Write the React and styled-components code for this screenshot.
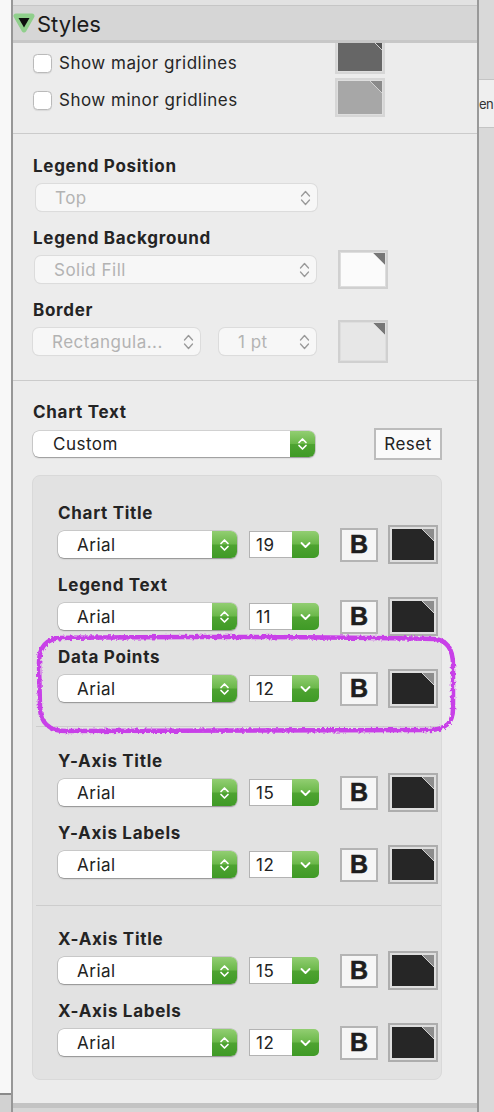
import React from 'react';
import styled, { createGlobalStyle } from 'styled-components';

const GlobalStyle = createGlobalStyle`
  html, body { margin: 0; padding: 0; }
  body {
    width: 494px;
    height: 1112px;
    overflow: hidden;
    background: #ececec;
    font-family: Inter, "Noto Sans", sans-serif;
    color: #242424;
  }
`;

const green = 'linear-gradient(180deg, #92ce72 0%, #6bb84a 48%, #4ea331 52%, #3f9a26 100%)';

const sections = [
  { top: 27, bottom: 17, rows: [
    { label: 'Chart Title', size: 19 },
    { label: 'Legend Text', size: 11 },
    { label: 'Data Points', size: 12 },
  ] },
  { top: 24, bottom: 20, rows: [
    { label: 'Y-Axis Title', size: 15 },
    { label: 'Y-Axis Labels', size: 12 },
  ] },
  { top: 23, bottom: 16, rows: [
    { label: 'X-Axis Title', size: 15 },
    { label: 'X-Axis Labels', size: 12 },
  ] },
];

function UpDown({ color = '#fff', weight = 1.7, big }) {
  const h = big ? 18 : 16;
  return (
    <svg width="11" height={h} viewBox={`0 0 11 ${h}`} fill="none" stroke={color}
      strokeWidth={weight} strokeLinecap="round" strokeLinejoin="round">
      {big ? (
        <>
          <path d="M1.5 7 L5.5 2.5 L9.5 7" />
          <path d="M1.5 11 L5.5 15.5 L9.5 11" />
        </>
      ) : (
        <>
          <path d="M2 6.5 L5.5 3 L9 6.5" />
          <path d="M2 9.5 L5.5 13 L9 9.5" />
        </>
      )}
    </svg>
  );
}

function Down() {
  return (
    <svg width="11" height="8" viewBox="0 0 11 8" fill="none" stroke="#fff"
      strokeWidth="1.8" strokeLinecap="round" strokeLinejoin="round">
      <path d="M1.5 2 L5.5 6 L9.5 2" />
    </svg>
  );
}

function Disclosure() {
  return (
    <svg width="22" height="22" viewBox="0 0 22 22">
      <path d="M3 4 L19 4 L11 18 Z" fill="#90cf8c" stroke="#90cf8c" strokeWidth="5" strokeLinejoin="round" />
      <path d="M5.5 6 L16.5 6 L11 15.5 Z" fill="#0e0e0e" />
    </svg>
  );
}

function Highlight() {
  return (
    <Overlay width="424" height="104" viewBox="0 0 424 104">
      <defs>
        <filter id="crayon" x="-5%" y="-10%" width="110%" height="120%">
          <feTurbulence type="fractalNoise" baseFrequency="0.35" numOctaves="2" seed="4" result="n" />
          <feDisplacementMap in="SourceGraphic" in2="n" scale="4" />
        </filter>
      </defs>
      <path
        d="M24 5 C120 3 300 4 398 6 C412 7 417 18 417 32 L417 76 C417 90 410 97 392 97 L30 98 C14 98 4 90 4 74 L3 30 C3 14 10 6 24 5 Z"
        fill="none" stroke="#c83fe8" strokeWidth="4.5" filter="url(#crayon)" />
    </Overlay>
  );
}

export default function App() {
  return (
    <Screen>
      <GlobalStyle />
      <LeftStrip>
        <StripFill />
        <StripFoot />
      </LeftStrip>

      <Panel>
        <TopEdge />
        <Header>
          <Disclosure />
          <HeaderTitle>Styles</HeaderTitle>
        </Header>

        <Body>
          <GridSection>
            <CheckColumn>
              <CheckRow><Checkbox />Show major gridlines</CheckRow>
              <CheckRow><Checkbox />Show minor gridlines</CheckRow>
            </CheckColumn>
            <SwatchColumn>
              <Swatch $frame="#d6d6d6"><Fill $color="#666666" $corner="#555" /></Swatch>
              <Swatch $frame="#d6d6d6"><Fill $color="#a7a7a7" $corner="#8a8a8a" /></Swatch>
            </SwatchColumn>
          </GridSection>

          <Section $top={22} $bottom={18}>
            <Block>
              <Label>Legend Position</Label>
              <Row>
                <DisabledSelect $w={281} $inset={3}>Top<UpDown big color="#999" weight={1.3} /></DisabledSelect>
              </Row>
            </Block>
            <Block>
              <Label>Legend Background</Label>
              <Row $gap={22}>
                <DisabledSelect $w={281} $inset={2}>Solid Fill<UpDown big color="#999" weight={1.3} /></DisabledSelect>
                <Swatch $frame="#d0d0d0" $h={39}><Fill $color="#fbfbfb" $corner="#777" /></Swatch>
              </Row>
            </Block>
            <Block>
              <Label>Border</Label>
              <Row>
                <DisabledSelect $w={167}>Rectangula...<UpDown big color="#999" weight={1.3} /></DisabledSelect>
                <DisabledSelect $w={97} $inset={19}>1 pt<UpDown big color="#999" weight={1.3} /></DisabledSelect>
                <Swatch $frame="#d0d0d0" $h={43} $inset={22}><Fill $color="#e7e7e7" $corner="#777" /></Swatch>
              </Row>
            </Block>
          </Section>

          <TextSection>
            <Block>
              <Label>Chart Text</Label>
              <Row $spread>
                <Select $w={282} $h={26}>
                  <SelectText $pad={20}>Custom</SelectText>
                  <Stepper><UpDown /></Stepper>
                </Select>
                <ResetButton>Reset</ResetButton>
              </Row>
            </Block>

            <Group>
              {sections.map((section, i) => (
                <React.Fragment key={i}>
                  {i > 0 && <Divider />}
                  <GroupSection $top={section.top} $bottom={section.bottom}>
                    {section.rows.map(row => (
                      <Block key={row.label}>
                        <Label>{row.label}</Label>
                        <Row>
                          <Select $w={179} $h={27}>
                            <SelectText $pad={19}>Arial</SelectText>
                            <Stepper><UpDown /></Stepper>
                          </Select>
                          <Combo>
                            <ComboInput>{row.size}</ComboInput>
                            <ComboButton><Down /></ComboButton>
                          </Combo>
                          <BoldButton>B</BoldButton>
                          <Swatch $frame="#adadad" $inset={10} $pad>
                            <Fill $color="#262626" $corner="#8d8d8d" />
                          </Swatch>
                        </Row>
                      </Block>
                    ))}
                  </GroupSection>
                </React.Fragment>
              ))}
            </Group>
          </TextSection>
        </Body>

        <Footer />
      </Panel>

      <RightStrip>
        <TabBox><TabText>en</TabText></TabBox>
      </RightStrip>

      <Highlight />
    </Screen>
  );
}

const Screen = styled.div`
  position: relative;
  display: flex;
  width: 494px;
  height: 1112px;
  overflow: hidden;
`;

const LeftStrip = styled.div`
  display: flex;
  flex-direction: column;
  width: 11px;
  border-right: 2px solid #979797;
`;

const StripFill = styled.div`
  flex: 1;
  background: #f8f8f8;
`;

const StripFoot = styled.div`
  height: 17px;
  border-top: 2px solid #8a8a8a;
  background: #d2d2d2;
`;

const Panel = styled.div`
  display: flex;
  flex-direction: column;
  width: 464px;
  background: #ececec;
`;

const TopEdge = styled.div`
  height: 5px;
  background: #e2e2e2;
  border-bottom: 1px solid #c6c6c6;
`;

const Header = styled.div`
  display: flex;
  align-items: center;
  gap: 2px;
  height: 34px;
  background: #d6d6d6;
  border-bottom: 3px solid #c7c7c7;
  position: relative;
  z-index: 1;
`;

const HeaderTitle = styled.span`
  font-size: 22px;
  color: #1b1b1b;
  margin-top: 1px;
`;

const Body = styled.div`
  flex: 1;
  overflow: hidden;
`;

const GridSection = styled.div`
  display: flex;
  justify-content: space-between;
  margin-top: -8px;
  padding: 0 92px 14px 20px;
  border-bottom: 1px solid #cbcbcb;
`;

const CheckColumn = styled.div`
  display: flex;
  flex-direction: column;
  padding-top: 9.5px;
`;

const CheckRow = styled.label`
  display: flex;
  align-items: center;
  gap: 7px;
  height: 37px;
  font-size: 17px;
  letter-spacing: 0.5px;
  color: #262626;
`;

const Checkbox = styled.span`
  width: 19px;
  height: 19px;
  box-sizing: border-box;
  background: #fff;
  border: 1px solid #bababa;
  border-radius: 4.5px;
  box-shadow: 0 0.5px 1px rgba(0, 0, 0, 0.08);
`;

const SwatchColumn = styled.div`
  display: flex;
  flex-direction: column;
  gap: 4px;
`;

const Swatch = styled.div`
  flex: none;
  display: flex;
  width: ${p => p.$w || 50}px;
  height: ${p => p.$h || 39}px;
  box-sizing: border-box;
  margin-left: ${p => p.$inset || 0}px;
  border: 2px solid ${p => p.$frame};
  padding: ${p => (p.$pad ? '2px' : '1px')};
  background: #dedede;
`;

const Fill = styled.div`
  flex: 1;
  background: linear-gradient(225deg,
    ${p => p.$corner} 0, ${p => p.$corner} 8px,
    #d2d2d2 8px, #d2d2d2 9px,
    ${p => p.$color} 9px);
`;

const Section = styled.div`
  display: flex;
  flex-direction: column;
  gap: 10px;
  padding: ${p => p.$top}px 35px ${p => p.$bottom}px 20px;
  border-bottom: 1px solid #cbcbcb;
`;

const TextSection = styled.div`
  display: flex;
  flex-direction: column;
  gap: 11px;
  padding: 21px 35px 0 20px;
`;

const Block = styled.div`
  display: flex;
  flex-direction: column;
  gap: 2px;
`;

const Label = styled.div`
  font-size: 17px;
  font-weight: 700;
  letter-spacing: 0.7px;
  line-height: 20px;
  color: #242424;
`;

const Row = styled.div`
  display: flex;
  align-items: center;
  justify-content: ${p => (p.$spread ? 'space-between' : 'flex-start')};
  gap: ${p => p.$gap || 0}px;
  height: 40px;
`;

const DisabledSelect = styled.div`
  flex: none;
  display: flex;
  align-items: center;
  justify-content: space-between;
  width: ${p => p.$w}px;
  height: 27px;
  box-sizing: border-box;
  margin-left: ${p => p.$inset || 0}px;
  padding: 0 6px 0 19px;
  background: #f7f7f7;
  border-radius: 6px;
  box-shadow: 0 0 0 1px #dcdcdc, 0 1px 1px rgba(0, 0, 0, 0.06);
  font-size: 17px;
  letter-spacing: 0.5px;
  color: #b3b3b3;
`;

const Select = styled.div`
  flex: none;
  display: flex;
  width: ${p => p.$w}px;
  height: ${p => p.$h}px;
  background: #fff;
  border-radius: 6px;
  box-shadow: 0 0 0 0.5px rgba(0, 0, 0, 0.22), 0 1px 1.5px rgba(0, 0, 0, 0.28);
  overflow: hidden;
`;

const SelectText = styled.span`
  flex: 1;
  display: flex;
  align-items: center;
  padding-left: ${p => p.$pad}px;
  font-size: 17px;
  letter-spacing: 0.5px;
  color: #222;
`;

const Stepper = styled.span`
  display: flex;
  align-items: center;
  justify-content: center;
  width: 25px;
  background: ${green};
`;

const ResetButton = styled.div`
  display: flex;
  align-items: center;
  justify-content: center;
  width: 68px;
  height: 32px;
  box-sizing: border-box;
  background: #fafafa;
  border: 2px solid #bcbcbc;
  font-size: 17px;
  letter-spacing: 0.5px;
  color: #222;
`;

const Group = styled.div`
  margin-left: -1px;
  background: #e2e2e2;
  border: 1px solid #d9d9d9;
  border-radius: 8px;
`;

const GroupSection = styled.div`
  display: flex;
  flex-direction: column;
  gap: 10px;
  padding: ${p => p.$top}px 3px ${p => p.$bottom}px 25px;
`;

const Divider = styled.div`
  height: 1px;
  margin-left: 3px;
  background: #cdcdcd;
`;

const Combo = styled.div`
  flex: none;
  display: flex;
  width: 70px;
  height: 27px;
  margin-left: 12px;
`;

const ComboInput = styled.div`
  flex: 1;
  display: flex;
  align-items: center;
  padding-left: 6px;
  background: #fff;
  border: 1px solid #b3b3b3;
  border-right: none;
  font-size: 17px;
  letter-spacing: 0.5px;
  color: #222;
`;

const ComboButton = styled.div`
  display: flex;
  align-items: center;
  justify-content: center;
  width: 27px;
  border-radius: 0 5px 5px 0;
  background: ${green};
`;

const BoldButton = styled.div`
  flex: none;
  display: flex;
  align-items: center;
  justify-content: center;
  width: 38px;
  height: 34px;
  box-sizing: border-box;
  margin-left: 21px;
  background: #f6f6f6;
  border: 2px solid #b4b4b4;
  font-family: "Liberation Sans", Arial, sans-serif;
  font-weight: 700;
  font-size: 25px;
  color: #1e1e1e;
  -webkit-text-stroke: 0.6px #1e1e1e;
`;

const Footer = styled.div`
  height: 4px;
  border-top: 5px solid #c3c3c3;
  background: #d6d6d6;
`;

const RightStrip = styled.div`
  flex: 1;
  border-left: 2px solid #999;
  background: #d9d9d9;
`;

const TabBox = styled.div`
  margin-top: 79px;
  height: 47px;
  border-top: 1px solid #c4c4c4;
  border-bottom: 1px solid #c4c4c4;
  background: #efefef;
  overflow: hidden;
  display: flex;
  align-items: center;
`;

const TabText = styled.span`
  font-size: 13px;
  letter-spacing: -0.5px;
  color: #333;
`;

const Overlay = styled.svg`
  position: absolute;
  left: 36px;
  top: 633px;
  pointer-events: none;
`;
